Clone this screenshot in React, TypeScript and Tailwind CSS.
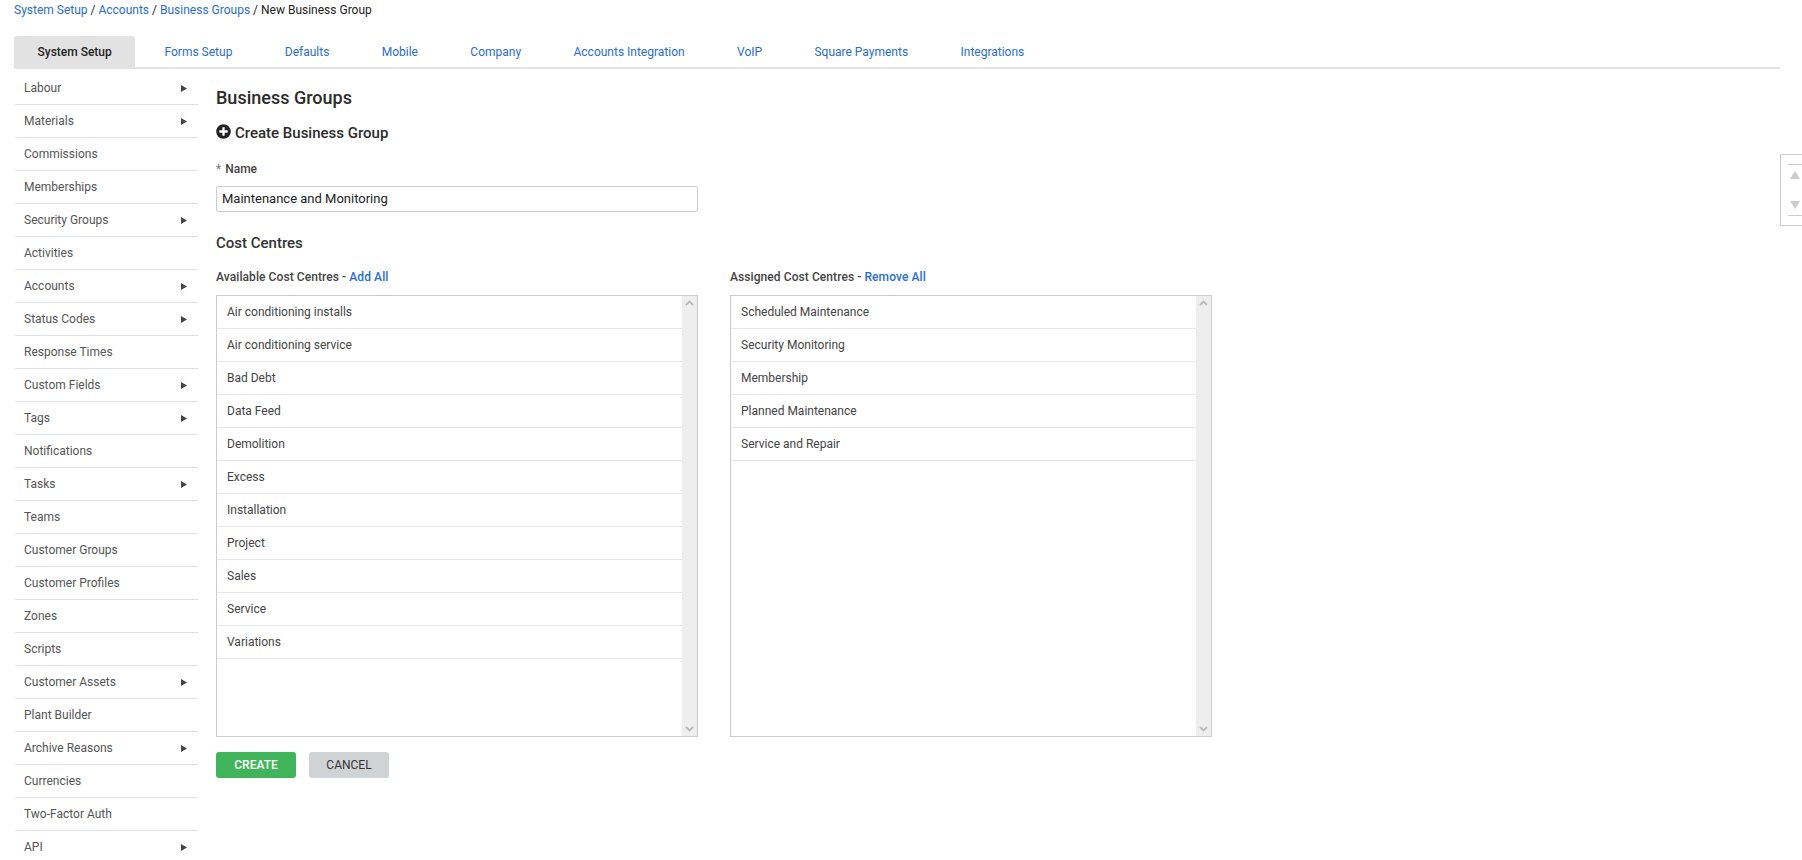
import { FaPlusCircle } from 'react-icons/fa';

const tabs = [
  'System Setup',
  'Forms Setup',
  'Defaults',
  'Mobile',
  'Company',
  'Accounts Integration',
  'VoIP',
  'Square Payments',
  'Integrations',
];

const menu = [
  { label: 'Labour', sub: true },
  { label: 'Materials', sub: true },
  { label: 'Commissions' },
  { label: 'Memberships' },
  { label: 'Security Groups', sub: true },
  { label: 'Activities' },
  { label: 'Accounts', sub: true },
  { label: 'Status Codes', sub: true },
  { label: 'Response Times' },
  { label: 'Custom Fields', sub: true },
  { label: 'Tags', sub: true },
  { label: 'Notifications' },
  { label: 'Tasks', sub: true },
  { label: 'Teams' },
  { label: 'Customer Groups' },
  { label: 'Customer Profiles' },
  { label: 'Zones' },
  { label: 'Scripts' },
  { label: 'Customer Assets', sub: true },
  { label: 'Plant Builder' },
  { label: 'Archive Reasons', sub: true },
  { label: 'Currencies' },
  { label: 'Two-Factor Auth' },
  { label: 'API', sub: true },
];

const available = [
  'Air conditioning installs',
  'Air conditioning service',
  'Bad Debt',
  'Data Feed',
  'Demolition',
  'Excess',
  'Installation',
  'Project',
  'Sales',
  'Service',
  'Variations',
];

const assigned = [
  'Scheduled Maintenance',
  'Security Monitoring',
  'Membership',
  'Planned Maintenance',
  'Service and Repair',
];

function CostCentreList({ items }: { items: string[] }) {
  return (
    <div className="flex h-[442px] border border-[#ccc]">
      <ul className="flex-1">
        {items.map((item) => (
          <li
            key={item}
            className="flex h-[33px] items-center border-b border-[#e6e8ea] pl-[10px] text-[12px] text-[#444]"
          >
            {item}
          </li>
        ))}
      </ul>
      <div className="flex w-[15px] flex-col items-center justify-between bg-[#eee] py-[4px]">
        <svg width="9" height="6" viewBox="0 0 9 6" fill="none" stroke="#bbb" strokeWidth="1.8">
          <path d="M1 5l3.5-3.5L8 5" />
        </svg>
        <svg width="9" height="6" viewBox="0 0 9 6" fill="none" stroke="#bbb" strokeWidth="1.8">
          <path d="M1 1l3.5 3.5L8 1" />
        </svg>
      </div>
    </div>
  );
}

export default function App() {
  return (
    <div className="relative h-[860px] overflow-hidden bg-white font-['Roboto',sans-serif] text-[#333]">
      <div className="h-[21px] pl-[14px] text-[12px] leading-[21px] text-[#222]">
        <a className="text-[#2a6dcf]">System Setup</a> / <a className="text-[#2a6dcf]">Accounts</a> /{' '}
        <a className="text-[#2a6dcf]">Business Groups</a> / <span>New Business Group</span>
      </div>

      <div className="mt-[15px] ml-[14px] box-content flex h-[31px] w-[1766px] border-b-2 border-[#e2e2e2]">
        {tabs.map((tab, i) =>
          i === 0 ? (
            <div
              key={tab}
              className="mr-[3px] flex h-[31px] items-center rounded-t-[3px] bg-[#e2e2e2] px-[23.5px] text-[12px] font-medium text-[#222]"
            >
              {tab}
            </div>
          ) : (
            <div key={tab} className="flex h-[31px] items-center px-[26.2px] text-[12px] text-[#2a6dcf]">
              {tab}
            </div>
          ),
        )}
      </div>

      <div className="mt-[3px] flex">
        <ul className="ml-[15px] w-[183px] shrink-0">
          {menu.map((row) => (
            <li
              key={row.label}
              className="flex h-[33px] items-center justify-between border-b border-[#dde1e6] pr-[11px] pl-[9px] text-[12px] text-[#555]"
            >
              {row.label}
              {row.sub && (
                <svg width="6" height="7" viewBox="0 0 6 7">
                  <path d="M0 0l6 3.5L0 7z" fill="#444" />
                </svg>
              )}
            </li>
          ))}
        </ul>

        <div className="ml-[18px] w-[995px]">
          <h1 className="mt-[14px] text-[18px] leading-[24px] font-medium text-[#2b2b2b]">Business Groups</h1>
          <h2 className="mt-[11px] flex h-[24px] items-center gap-[4px] text-[15px] font-medium text-[#2b2b2b]">
            <FaPlusCircle className="mb-[4px] text-[15px] text-[#222]" />
            Create Business Group
          </h2>

          <label className="mt-[16px] block text-[12px] leading-[16px] font-medium text-[#444]">
            <span className="mr-[1px] font-normal text-[#777]">*</span> Name
          </label>
          <input
            readOnly
            value="Maintenance and Monitoring"
            className="mt-[9px] block h-[26px] w-[482px] rounded-[2px] border border-[#ccc] px-[5px] pb-[1px] text-[13px] text-[#222] outline-none"
          />

          <h3 className="mt-[21px] text-[15px] leading-[20px] font-medium text-[#333]">Cost Centres</h3>

          <div className="mt-[16px] grid grid-cols-[482px_482px] gap-x-[32px]">
            <div>
              <p className="h-[16px] text-[12px] leading-[16px] font-medium tracking-[0.08px] text-[#444]">
                Available Cost Centres - <a className="text-[#2a6dcf]">Add All</a>
              </p>
              <div className="mt-[10px]">
                <CostCentreList items={available} />
              </div>
            </div>
            <div>
              <p className="h-[16px] text-[12px] leading-[16px] font-medium tracking-[0.08px] text-[#444]">
                Assigned Cost Centres - <a className="text-[#2a6dcf]">Remove All</a>
              </p>
              <div className="mt-[10px]">
                <CostCentreList items={assigned} />
              </div>
            </div>
          </div>

          <div className="mt-[15px] flex gap-[13px]">
            <button className="h-[26px] w-[80px] rounded-[3px] bg-[#40b45a] text-[12px] font-medium text-white">
              CREATE
            </button>
            <button className="h-[26px] w-[80px] rounded-[3px] bg-[#d0d3d6] text-[12px] text-[#333]">CANCEL</button>
          </div>
        </div>
      </div>

      <div className="absolute top-[154px] left-[1780px] flex h-[72px] w-[40px] flex-col border border-[#ccc] pt-[9px] pb-[9px] pl-[7px]">
        <div className="flex flex-1 flex-col items-start justify-between border-y border-[#ccc] py-[6px] pl-[2px]">
          <svg width="10" height="8" viewBox="0 0 10 8">
            <path d="M5 0l5 8H0z" fill="#ccc" />
          </svg>
          <svg width="10" height="8" viewBox="0 0 10 8">
            <path d="M0 0h10L5 8z" fill="#ccc" />
          </svg>
        </div>
      </div>
    </div>
  );
}
